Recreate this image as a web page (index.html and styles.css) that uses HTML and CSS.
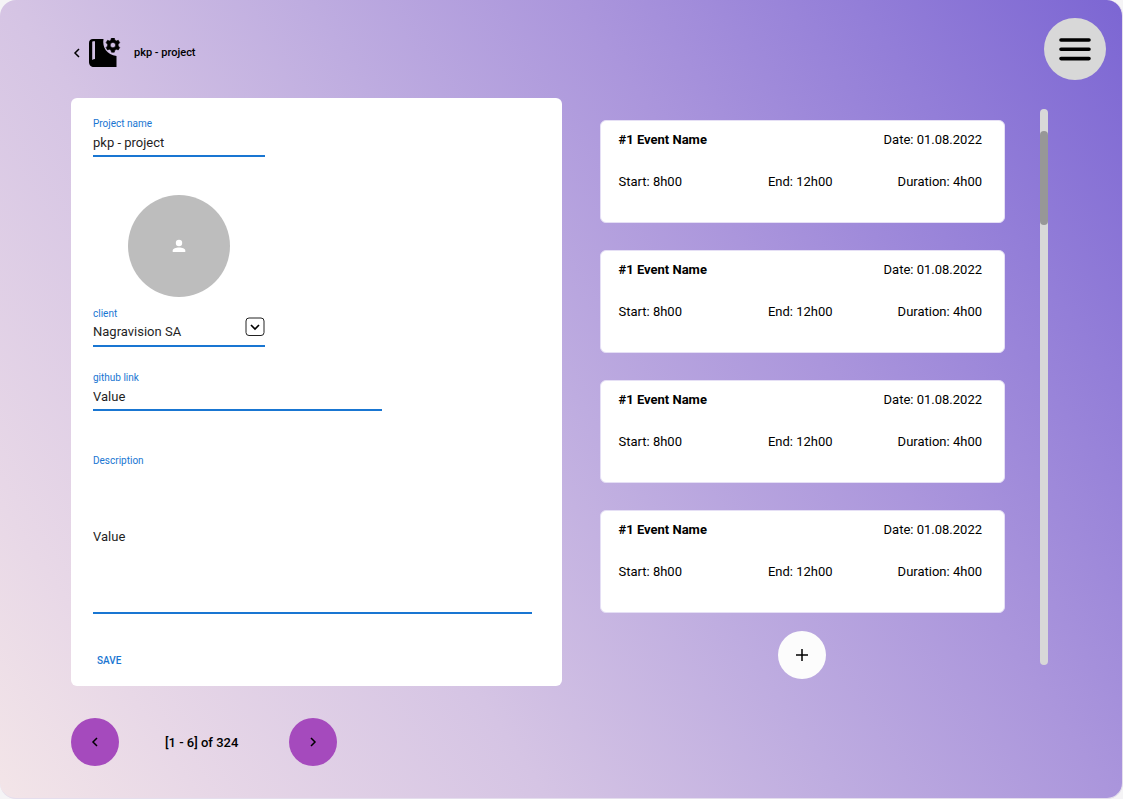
FILE: index.html
```html
<!DOCTYPE html>
<html lang="en">
<head>
<meta charset="utf-8">
<meta name="viewport" content="width=device-width, initial-scale=1">
<title>pkp - project</title>
<link rel="stylesheet" href="styles.css">
</head>
<body>
<div class="app">
  <header class="topbar">
    <nav class="crumbs">
      <a class="back" href="#" aria-label="Back">
        <svg width="8" height="10" viewBox="0 0 8 10"><path d="M6 1 2 5l4 4" fill="none" stroke="#000" stroke-width="1.500"/></svg>
      </a>
      <svg class="book" width="32" height="30" viewBox="0 0 32 30" aria-hidden="true">
        <path fill="#000" fill-rule="evenodd" d="M4 1h10.500C13 9 18 17 27.500 18v11H5c-3 0-5-2-5-5V5c0-2.500 1.500-4 4-4ZM3.200 4.200v17.800c.8-.6 1.700-.9 2.800-.9V3.200H4.500c-.8 0-1.300.4-1.300 1Z"/>
        <path fill="#000" stroke="#000" stroke-width=".6" stroke-linejoin="round" fill-rule="evenodd" d="m22.100 1 .4-1h2.800l.5 2 1.500.9 2-.6 1.400 2.400-1.500 1.500v1.800l1.500 1.500-1.400 2.400-2-.6-1.500.9-.5 2h-2.800l-.5-2-1.500-.9-2 .6-1.400-2.400L18.600 8V6.200l-1.500-1.500 1.400-2.400 2 .6 1.500-.9ZM23.900 4.400a2.700 2.700 0 1 0 0 5.400 2.700 2.700 0 0 0 0-5.400Z"/>
      </svg>
      <h1 class="title">pkp - project</h1>
    </nav>
    <button class="menu" type="button" aria-label="Menu">
      <svg width="32" height="24" viewBox="0 0 32 24"><path d="M2 3h28M2 12.300h28M2 21.600h28" stroke="#000" stroke-width="3.600" stroke-linecap="round"/></svg>
    </button>
  </header>

  <main class="content">
    <form class="panel">
      <div class="field short">
        <label for="name">Project name</label>
        <input id="name" type="text" value="pkp - project">
      </div>
      <div class="avatar">
        <svg width="14" height="14" viewBox="0 0 14 14" aria-hidden="true"><circle cx="7" cy="4" r="3.200" fill="#fff"/><path d="M.7 13v-1.500C.7 9.500 4 8.500 7 8.500s6.300 1 6.300 3V13Z" fill="#fff"/></svg>
      </div>
      <div class="field short client">
        <label for="client">client</label>
        <div class="pick">
          <select id="client"><option>Nagravision SA</option></select>
          <svg class="arrow" width="20" height="20" viewBox="0 0 20 20" aria-hidden="true"><rect x="1" y="1" width="18" height="17.500" rx="3" fill="#fff" stroke="#222"/><path d="m6 8 4 4 4-4" fill="none" stroke="#000" stroke-width="1.700"/></svg>
        </div>
      </div>
      <div class="field medium">
        <label for="link">github link</label>
        <input id="link" type="text" value="Value">
      </div>
      <div class="field long">
        <label for="desc">Description</label>
        <textarea id="desc">Value</textarea>
      </div>
      <button class="save" type="button">SAVE</button>
    </form>

    <section class="events" aria-label="Events">
      <article class="event">
        <div class="head"><h2>#1 Event Name</h2><span>Date: 01.08.2022</span></div>
        <div class="times"><span>Start: 8h00</span><span>End: 12h00</span><span>Duration: 4h00</span></div>
      </article>
      <article class="event">
        <div class="head"><h2>#1 Event Name</h2><span>Date: 01.08.2022</span></div>
        <div class="times"><span>Start: 8h00</span><span>End: 12h00</span><span>Duration: 4h00</span></div>
      </article>
      <article class="event">
        <div class="head"><h2>#1 Event Name</h2><span>Date: 01.08.2022</span></div>
        <div class="times"><span>Start: 8h00</span><span>End: 12h00</span><span>Duration: 4h00</span></div>
      </article>
      <article class="event">
        <div class="head"><h2>#1 Event Name</h2><span>Date: 01.08.2022</span></div>
        <div class="times"><span>Start: 8h00</span><span>End: 12h00</span><span>Duration: 4h00</span></div>
      </article>
      <button class="round add" type="button" aria-label="Add event">
        <svg width="12" height="12" viewBox="0 0 12 12"><path d="M6 0v12M0 6h12" stroke="#000" stroke-width="1.500"/></svg>
      </button>
    </section>

    <div class="track"><div class="thumb"></div></div>
  </main>

  <footer class="pager">
    <button class="round page" type="button" aria-label="Previous page">
      <svg width="8" height="10" viewBox="0 0 8 10"><path d="M6 1 2 5l4 4" fill="none" stroke="#000" stroke-width="1.500"/></svg>
    </button>
    <span>[1 - 6] of 324</span>
    <button class="round page" type="button" aria-label="Next page">
      <svg width="8" height="10" viewBox="0 0 8 10"><path d="m2 1 4 4-4 4" fill="none" stroke="#000" stroke-width="1.500"/></svg>
    </button>
  </footer>
</div>
</body>
</html>
```
FILE: styles.css
```css
* { box-sizing: border-box; }
body { margin: 0; background: #f5f4f6; font-family: Roboto, "Liberation Sans", sans-serif; color: #000; }
h1, h2 { margin: 0; }
svg { display: block; flex: none; }
button { border: 0; padding: 0; cursor: pointer; font-family: inherit; }

.app {
  min-height: 100vh;
  padding: 18px 16px 32px 71px;
  border: 1px solid #e4deed;
  border-width: 0 1px 1px 0;
  border-radius: 16px;
  background: linear-gradient(56deg, #f3e5e8 0%, #e8d8e7 12%, #d5c4e4 33%, #beace0 51%, #ab96dc 67%, #937ed8 84%, #7c66d3 100%);
}

.topbar { display: flex; justify-content: space-between; align-items: flex-start; }
.crumbs { display: flex; align-items: center; padding: 20px 0 0 2px; }
.back { margin-right: 8px; }
.title { margin-left: 13px; font-size: 11px; line-height: 16px; font-weight: 500; }
.menu { width: 62px; height: 62px; border-radius: 50%; background: #d8d8d8; display: grid; place-items: center; }

.content {
  display: grid;
  grid-template-columns: minmax(0, 490fr) minmax(0, 443fr) 43px;
  align-items: start;
  padding: 18px 58px 0 0;
}
.panel { padding: 19px 22px 17px; background: #fff; border-radius: 6px; }

.field { display: flex; flex-direction: column; border-bottom: 2px solid #1976d2; }
.field label { font-size: 10px; line-height: 14px; color: #1976d2; }
.field input, .field select, .field textarea {
  width: 100%; border: 0; padding: 0; margin: 0; background: none; outline: none; border-radius: 0;
  font-family: inherit; font-size: 13px; line-height: 22px; color: #1f1f1f;
}
.field input, .field select { height: 24px; padding-bottom: 2px; appearance: none; }
.short { width: 172px; }
.medium { width: 289px; margin-top: 24px; }
.long { margin: 43px 8px 0 0; }
.field textarea { height: 144px; padding-top: 58px; resize: none; }
.avatar { width: 102px; height: 102px; margin: 38px 0 0 35px; border-radius: 50%; background: #bdbdbd; display: grid; place-items: center; }
.client { margin-top: 10px; }
.pick { display: grid; }
.pick > * { grid-area: 1 / 1; }
.arrow { justify-self: end; pointer-events: none; margin-top: -4px; }
.save { display: block; margin-top: 39px; padding: 0 4px; background: none; color: #1976d2; font-size: 10px; line-height: 16px; font-weight: 500; }

.events { display: flex; flex-direction: column; gap: 27px; padding: 22px 0 0 38px; }
.event { padding: 10px 22px 31px 18px; background: #fff; border: 1px solid #e5dff5; border-radius: 6px; font-size: 13px; line-height: 18px; }
.head { display: flex; justify-content: space-between; margin-bottom: 24px; }
.head h2 { font-size: 13px; line-height: 18px; font-weight: 700; }
.times { display: grid; grid-template-columns: 1fr auto 1fr; }
.times span:last-child { text-align: right; }
.round { width: 48px; height: 48px; border-radius: 50%; display: grid; place-items: center; }
.add { align-self: center; margin-top: -9px; background: #fcfcfc; }

.track { width: 8px; height: 556px; margin: 11px 0 0 35px; padding-top: 22px; border-radius: 4px; background: #d8d8d8; }
.thumb { height: 94px; border-radius: 4px; background: #979797; }

.pager { display: flex; align-items: center; margin-top: 32px; font-size: 13px; font-weight: 500; }
.pager span { margin: 0 51px 0 46px; }
.page { background: #a54abd; }
```
